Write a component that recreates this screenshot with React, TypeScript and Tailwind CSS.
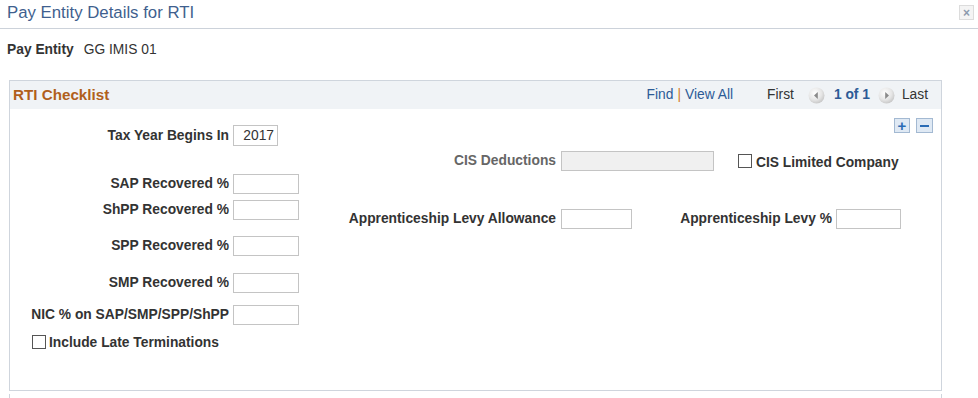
import React from "react";

const font = { fontFamily: '"Liberation Sans", Arial, sans-serif' };

function NavArrow({ dir }: { dir: "left" | "right" }) {
  return (
    <svg width="17" height="17" viewBox="0 0 17 17">
      <defs>
        <radialGradient id={`g-${dir}`} cx="40%" cy="35%" r="70%">
          <stop offset="0%" stopColor="#ffffff" />
          <stop offset="60%" stopColor="#e6e6e6" />
          <stop offset="100%" stopColor="#c4c4c4" />
        </radialGradient>
      </defs>
      <circle cx="8.5" cy="8.5" r="8" fill={`url(#g-${dir})`} />
      {dir === "left" ? (
        <path d="M9.8 5 L6 8.5 L9.8 12 Z" fill="#8a8a8a" />
      ) : (
        <path d="M7.2 5 L11 8.5 L7.2 12 Z" fill="#8a8a8a" />
      )}
    </svg>
  );
}

function Field({ label, width, value }: { label: string; width: string; value?: string }) {
  return (
    <div className="flex items-center">
      <span className="w-[223px] pr-[4px] text-right font-bold text-[#333]">{label}</span>
      <Input width={width} value={value} />
    </div>
  );
}

function Input({ width, value, disabled }: { width: string; value?: string; disabled?: boolean }) {
  return (
    <span
      className={`${width} box-border flex h-[20px] items-center justify-end border border-[#c4c4c4] pr-[3px] font-normal text-[#333] ${
        disabled ? "bg-[#f0f0f0]" : "bg-white"
      }`}
    >
      {value}
    </span>
  );
}

function Checkbox() {
  return <span className="box-border inline-block h-[14px] w-[14px] border border-[#555] bg-white" />;
}

export default function App() {
  return (
    <div className="h-[398px] w-[978px] overflow-hidden bg-white text-[13.8px] leading-[16px] text-[#333]" style={font}>
      {/* dialog title bar */}
      <div className="flex h-[29px] items-center justify-between border-b border-[#ccd2da] pl-[7px] pr-[4px] pb-[3px]">
        <span className="text-[16.8px] text-[#3f5f8e]">Pay Entity Details for RTI</span>
        <span className="flex h-[15px] w-[15px] items-center justify-center border border-[#dcdcdc] bg-[#f4f4f4] text-[12px] font-bold leading-none text-[#8b9aad]">
          ×
        </span>
      </div>

      <div className="mt-[14px] flex h-[14px] items-center pl-[7px]">
        <span className="font-bold">Pay Entity</span>
        <span className="ml-[10px]">GG IMIS 01</span>
      </div>

      {/* RTI Checklist grid */}
      <div className="ml-[9px] mt-[23px] w-[933px] border border-[#cfd5dd]">
        <div className="flex h-[28px] items-center justify-between bg-[#f0f3f6] pl-[3px] pr-[13px]">
          <span className="text-[15.2px] font-bold text-[#b05f1c]">RTI Checklist</span>
          <div className="flex items-center text-[#333]">
            <span className="text-[#2d5b96]">Find</span>
            <span className="mx-[4px] text-[#d4791f]">|</span>
            <span className="text-[#2d5b96]">View All</span>
            <span className="ml-[34px] text-[#333]">First</span>
            <span className="ml-[14px] flex">
              <NavArrow dir="left" />
            </span>
            <span className="ml-[9px] font-bold text-[#2d5b96]">1 of 1</span>
            <span className="ml-[8px] flex">
              <NavArrow dir="right" />
            </span>
            <span className="ml-[7px]">Last</span>
          </div>
        </div>

        <div className="relative h-[281px] pt-[16px]">
          <div className="absolute right-[8px] top-[9px] flex gap-[6px]">
            <span className="flex h-[15px] w-[16px] items-center justify-center border border-[#a3b9d2] bg-[#dfe9f4] text-[15px] font-bold leading-none text-[#2b6cb5]">
              +
            </span>
            <span className="flex h-[15px] w-[17px] items-center justify-center border border-[#a3b9d2] bg-[#dfe9f4]">
              <span className="h-[2px] w-[9px] bg-[#2b6cb5]" />
            </span>
          </div>

          <div className="flex">
            <div className="flex flex-col">
              <Field label="Tax Year Begins In" width="w-[45px] h-[21px]" value="2017" />
              <div className="mt-[28px]">
                <Field label="SAP Recovered %" width="w-[66px]" />
              </div>
              <div className="mt-[6px]">
                <Field label="ShPP Recovered %" width="w-[66px]" />
              </div>
              <div className="mt-[16px]">
                <Field label="SPP Recovered %" width="w-[66px]" />
              </div>
              <div className="mt-[17px]">
                <Field label="SMP Recovered %" width="w-[66px]" />
              </div>
              <div className="mt-[12px]">
                <Field label="NIC % on SAP/SMP/SPP/ShPP" width="w-[66px]" />
              </div>
              <div className="mt-[8px] flex items-center pl-[22px]">
                <Checkbox />
                <span className="ml-[3px] mt-[2px] font-bold">Include Late Terminations</span>
              </div>
            </div>

            <div className="flex flex-col pt-[26px]">
              <div className="flex items-center">
                <span className="w-[262px] pr-[5px] text-right font-bold text-[#666]">CIS Deductions</span>
                <Input width="w-[153px]" disabled />
                <span className="ml-[24px] flex items-center">
                  <Checkbox />
                  <span className="ml-[4px] mt-[4px] font-bold">CIS Limited Company</span>
                </span>
              </div>
              <div className="mt-[38px] flex items-center">
                <span className="w-[262px] pr-[5px] text-right font-bold">Apprenticeship Levy Allowance</span>
                <Input width="w-[71px]" />
                <span className="w-[204px] pr-[4px] text-right font-bold">Apprenticeship Levy %</span>
                <Input width="w-[65px]" />
              </div>
            </div>
          </div>
        </div>
      </div>

      <div className="ml-[9px] mt-[3px] h-[10px] w-[933px] border-x border-[#cfd5dd]" />
    </div>
  );
}
